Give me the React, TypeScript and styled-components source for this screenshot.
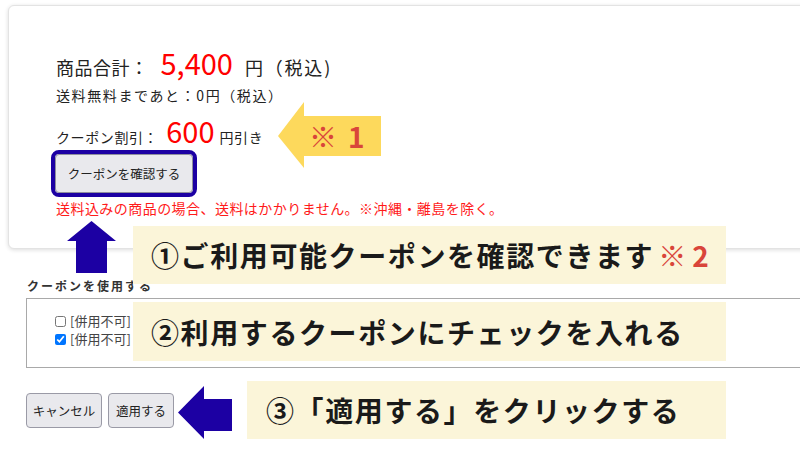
import React from 'react'
import styled, { createGlobalStyle } from 'styled-components'

const GlobalStyle = createGlobalStyle`
  html, body {
    margin: 0;
    padding: 0;
    background: #ffffff;
    overflow: hidden;
  }
  body {
    font-family: "Noto Sans CJK JP", "Noto Sans", sans-serif;
    color: #222;
  }
`

const Page = styled.div`
  position: relative;
  width: 800px;
  height: 450px;
  overflow: hidden;
  padding-top: 5px;
  box-sizing: border-box;
`

const Card = styled.div`
  margin-left: 8px;
  width: 830px;
  height: 244px;
  box-sizing: border-box;
  padding: 41px 47px 0;
  border: 1px solid #e3e3e3;
  border-radius: 6px;
  box-shadow: 0 1px 4px rgba(0, 0, 0, 0.14);
  background: #fff;
`

const PriceRow = styled.div`
  display: flex;
  align-items: baseline;
  color: #222;
  line-height: 1.2;
`

const Label = styled.span<{ $size: number; $spacing?: number }>`
  font-size: ${p => p.$size}px;
  letter-spacing: ${p => p.$spacing ?? 0}px;
`

const Amount = styled.span`
  font-size: 29px;
  color: #ff0000;
  line-height: 1.1;
`

const Note = styled.div`
  font-size: 14px;
  letter-spacing: 1.6px;
  margin-top: 6px;
  margin-bottom: 10px;
  color: #222;
`

const CheckButton = styled.button`
  margin-top: 7px;
  margin-left: -1px;
  width: 138px;
  height: 39px;
  background: #e9e9ed;
  border: 1px solid #8f8f9d;
  border-radius: 4px;
  font-family: inherit;
  font-size: 12.5px;
  color: #222;
  outline: 4px solid #1c00a3;
  padding: 0;
`

const Warning = styled.div`
  margin-top: 5px;
  font-size: 14px;
  color: #ff1a1a;
  letter-spacing: 0.45px;
`

const CouponSection = styled.div`
  margin-left: 26px;
  margin-top: 29px;
`

const SectionTitle = styled.div`
  font-size: 12px;
  font-weight: 700;
  letter-spacing: 2px;
  color: #333;
  padding-left: 1px;
  line-height: 16px;
`

const CouponBox = styled.div`
  margin-top: 4px;
  width: 830px;
  height: 70px;
  box-sizing: border-box;
  border: 1px solid #a9a9a9;
  padding: 14px 0 0 28px;
  display: flex;
  flex-direction: column;
  gap: 2px;
`

const CouponItem = styled.label`
  display: flex;
  align-items: center;
  gap: 4px;
  font-size: 13px;
  color: #444;
  line-height: 16px;

  input {
    margin: 0;
    width: 11px;
    height: 11px;
    accent-color: #0075ff;
  }
`

const ActionRow = styled.div`
  display: flex;
  gap: 6px;
  margin-top: 25px;
`

const ActionButton = styled.button<{ $w: number }>`
  width: ${p => p.$w}px;
  height: 35px;
  background: #e9e9ed;
  border: 1px solid #9a9aa6;
  border-radius: 4px;
  font-family: inherit;
  font-size: 12.5px;
  color: #222;
  padding: 0;
`

/* annotation overlays */

const Callout = styled.div<{ $x: number; $y: number; $w: number; $h: number; $pad: number }>`
  position: absolute;
  left: ${p => p.$x}px;
  top: ${p => p.$y}px;
  width: ${p => p.$w}px;
  height: ${p => p.$h}px;
  padding-left: ${p => p.$pad}px;
  box-sizing: border-box;
  background: #fbf5d9;
  display: flex;
  align-items: center;
  font-size: 28px;
  font-weight: 700;
  letter-spacing: 1.6px;
  color: #1a1a1a;
  white-space: nowrap;
`

const Mark = styled.span<{ $gap: number }>`
  color: #d9453a;
  font-weight: 700;
  letter-spacing: 0;
  .kome {
    font-weight: 400;
    margin-right: ${p => p.$gap}px;
  }
`

const ArrowBox = styled.div<{ $x: number; $y: number; $w: number; $h: number }>`
  position: absolute;
  left: ${p => p.$x}px;
  top: ${p => p.$y}px;
  width: ${p => p.$w}px;
  height: ${p => p.$h}px;

  svg {
    position: absolute;
    inset: 0;
    display: block;
  }
`

const ArrowLabel = styled.div`
  position: absolute;
  left: 31px;
  top: 12px;
  height: 44px;
  display: flex;
  align-items: center;
  font-size: 28px;
`

const YELLOW = '#fdd95c'
const BLUE = '#1c00a3'

export default function App() {
  return (
    <>
      <GlobalStyle />
      <Page>
        <Card>
          <PriceRow>
            <Label $size={18} $spacing={0.5}>商品合計：</Label>
            <Amount style={{ marginLeft: 12 }}>5,400</Amount>
            <Label $size={18} $spacing={1.8} style={{ marginLeft: 12 }}>円（税込)</Label>
          </PriceRow>
          <Note>送料無料まであと：0円（税込）</Note>
          <PriceRow>
            <Label $size={14} $spacing={0.6}>クーポン割引：</Label>
            <Amount style={{ marginLeft: 8 }}>600</Amount>
            <Label $size={14} $spacing={0.6} style={{ marginLeft: 5 }}>円引き</Label>
          </PriceRow>
          <CheckButton>クーポンを確認する</CheckButton>
          <Warning>送料込みの商品の場合、送料はかかりません。※沖縄・離島を除く。</Warning>
        </Card>

        <CouponSection>
          <SectionTitle>クーポンを使用する</SectionTitle>
          <CouponBox>
            <CouponItem>
              <input type="checkbox" readOnly />
              [併用不可]
            </CouponItem>
            <CouponItem>
              <input type="checkbox" defaultChecked />
              [併用不可]
            </CouponItem>
          </CouponBox>
          <ActionRow>
            <ActionButton $w={76}>キャンセル</ActionButton>
            <ActionButton $w={66}>適用する</ActionButton>
          </ActionRow>
        </CouponSection>

        <ArrowBox $x={278} $y={102} $w={103} $h={66}>
          <svg width="103" height="66" viewBox="0 0 103 66">
            <polygon points="0,34 26,0 26,14 103,14 103,54 26,54 26,66" fill={YELLOW} />
          </svg>
          <ArrowLabel>
            <Mark $gap={11}><span className="kome">※</span>1</Mark>
          </ArrowLabel>
        </ArrowBox>

        <ArrowBox $x={67} $y={221} $w={49} $h={52}>
          <svg width="49" height="52" viewBox="0 0 49 52">
            <polygon points="24.5,0 49,20 40,20 40,52 9,52 9,20 0,20" fill={BLUE} />
          </svg>
        </ArrowBox>

        <ArrowBox $x={178} $y={386} $w={54} $h={53}>
          <svg width="54" height="53" viewBox="0 0 54 53">
            <polygon points="0,26.5 26,0 26,13 54,13 54,45 26,45 26,53" fill={BLUE} />
          </svg>
        </ArrowBox>

        <Callout $x={133} $y={226} $w={593} $h={58} $pad={18}>
          ①ご利用可能クーポンを確認できます <Mark $gap={6} style={{ marginLeft: 4 }}><span className="kome">※</span>2</Mark>
        </Callout>
        <Callout $x={133} $y={302} $w={593} $h={59} $pad={18}>
          ②利用するクーポンにチェックを入れる
        </Callout>
        <Callout $x={247} $y={381} $w={479} $h={58} $pad={19}>
          ③「適用する」をクリックする
        </Callout>
      </Page>
    </>
  )
}
